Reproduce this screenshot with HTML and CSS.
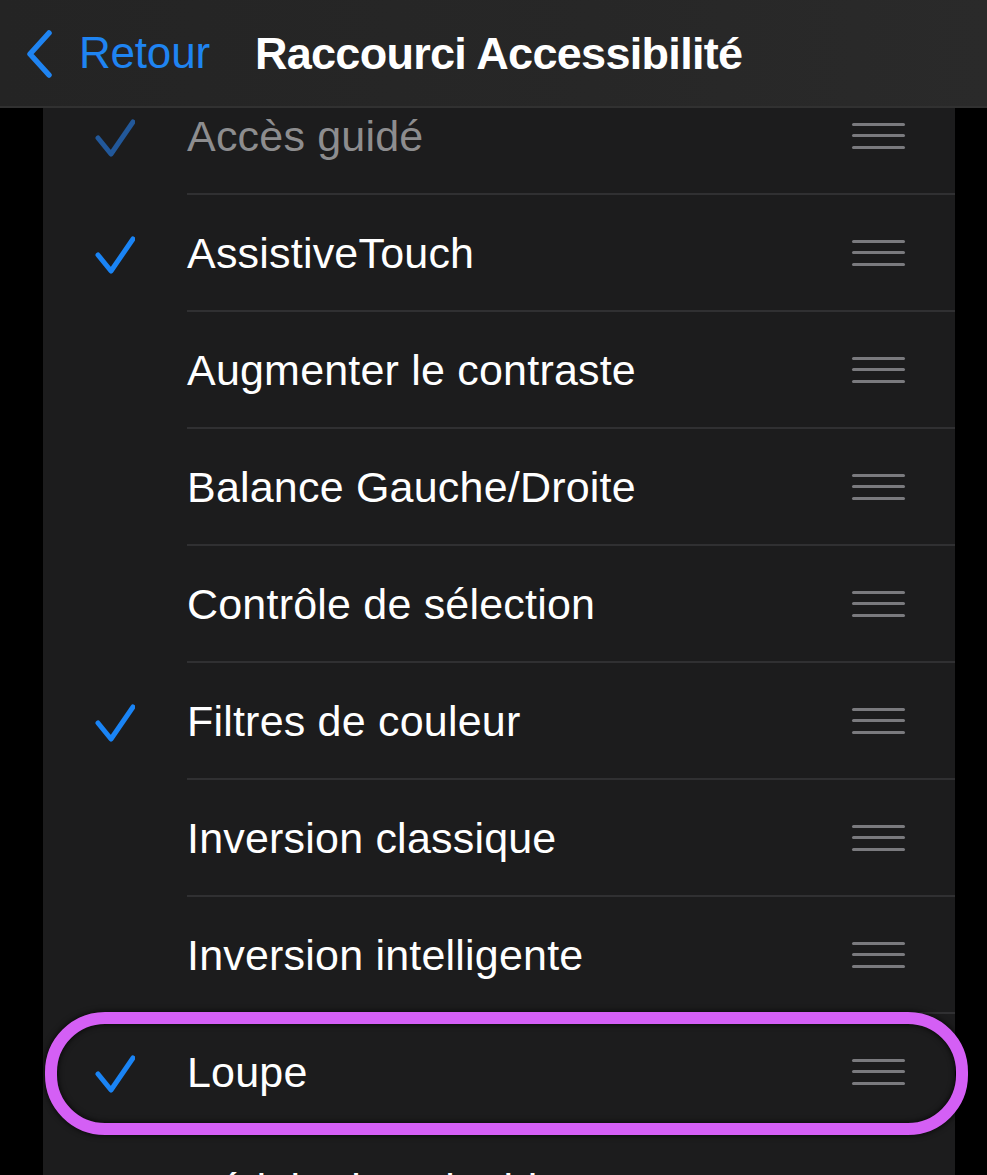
FILE: index.html
```html
<!DOCTYPE html>
<html lang="fr">
<head>
<meta charset="utf-8">
<title>Raccourci Accessibilité</title>
<link rel="stylesheet" href="styles.css">
</head>
<body>
<header class="navbar">
  <a class="back">
    <svg class="chevron" width="30" height="48" viewBox="0 0 30 48"><path d="M25 3 L6 24 L25 45" fill="none" stroke="#1f84f2" stroke-width="5.5" stroke-linecap="round" stroke-linejoin="round"/></svg>
    <span class="back-label">Retour</span>
  </a>
  <h1 class="title">Raccourci Accessibilité</h1>
</header>
<main class="list">
  <div class="row dim">
    <div class="check-cell"><svg class="check" width="40" height="40" viewBox="0 0 40 40"><path d="M3 20 L16 36 L38 4" fill="none" stroke="currentColor" stroke-width="5" stroke-linecap="round" stroke-linejoin="round"/></svg></div>
    <div class="content"><span class="label">Accès guidé</span><span class="handle"><i></i><i></i><i></i></span></div>
  </div>
  <div class="row">
    <div class="check-cell"><svg class="check" width="40" height="40" viewBox="0 0 40 40"><path d="M3 20 L16 36 L38 4" fill="none" stroke="currentColor" stroke-width="5" stroke-linecap="round" stroke-linejoin="round"/></svg></div>
    <div class="content"><span class="label">AssistiveTouch</span><span class="handle"><i></i><i></i><i></i></span></div>
  </div>
  <div class="row">
    <div class="check-cell"></div>
    <div class="content"><span class="label">Augmenter le contraste</span><span class="handle"><i></i><i></i><i></i></span></div>
  </div>
  <div class="row">
    <div class="check-cell"></div>
    <div class="content"><span class="label">Balance Gauche/Droite</span><span class="handle"><i></i><i></i><i></i></span></div>
  </div>
  <div class="row">
    <div class="check-cell"></div>
    <div class="content"><span class="label">Contrôle de sélection</span><span class="handle"><i></i><i></i><i></i></span></div>
  </div>
  <div class="row">
    <div class="check-cell"><svg class="check" width="40" height="40" viewBox="0 0 40 40"><path d="M3 20 L16 36 L38 4" fill="none" stroke="currentColor" stroke-width="5" stroke-linecap="round" stroke-linejoin="round"/></svg></div>
    <div class="content"><span class="label">Filtres de couleur</span><span class="handle"><i></i><i></i><i></i></span></div>
  </div>
  <div class="row">
    <div class="check-cell"></div>
    <div class="content"><span class="label">Inversion classique</span><span class="handle"><i></i><i></i><i></i></span></div>
  </div>
  <div class="row">
    <div class="check-cell"></div>
    <div class="content"><span class="label">Inversion intelligente</span><span class="handle"><i></i><i></i><i></i></span></div>
  </div>
  <div class="row highlighted">
    <div class="check-cell"><svg class="check" width="40" height="40" viewBox="0 0 40 40"><path d="M3 20 L16 36 L38 4" fill="none" stroke="currentColor" stroke-width="5" stroke-linecap="round" stroke-linejoin="round"/></svg></div>
    <div class="content"><span class="label">Loupe</span><span class="handle"><i></i><i></i><i></i></span></div>
    <span class="ring"></span>
  </div>
  <div class="row">
    <div class="check-cell"></div>
    <div class="content"><span class="label">Réduire le point blanc</span><span class="handle"><i></i><i></i><i></i></span></div>
  </div>
</main>
</body>
</html>
```
FILE: styles.css
```css
html, body {
  margin: 0;
  padding: 0;
  background: #000;
  overflow: hidden;
  height: 1175px;
}
body {
  font-family: "Liberation Sans", Arial, sans-serif;
  color: #fff;
}
.navbar {
  position: relative;
  z-index: 2;
  height: 108px;
  box-sizing: border-box;
  display: flex;
  align-items: center;
  padding-left: 24px;
  background: linear-gradient(90deg, #242424 0%, #272727 60%, #2a2a2a 100%);
  border-bottom: 2px solid #313131;
}
.back {
  display: flex;
  align-items: center;
  color: #1f84f2;
}
.chevron {
  display: block;
  margin-top: 2px;
}
.back-label {
  margin-left: 25px;
  font-size: 44px;
  line-height: 1;
  letter-spacing: -0.2px;
}
.title {
  margin: 0 0 0 45px;
  font-size: 45px;
  font-weight: 700;
  line-height: 1;
  letter-spacing: -0.7px;
  color: #fff;
}
.list {
  margin: -30px 0 0 43px;
  width: 912px;
  background: #1c1c1d;
}
.row {
  display: flex;
  height: 117px;
}
.check-cell {
  width: 144px;
  flex: none;
  display: flex;
  align-items: center;
  justify-content: center;
  color: #1a84f5;
}
.check {
  display: block;
  margin-top: 2px;
}
.content {
  flex: 1;
  display: flex;
  align-items: center;
  justify-content: space-between;
  border-bottom: 2px solid #303032;
  padding-right: 50px;
}
.label {
  font-size: 43px;
  letter-spacing: 0.2px;
  margin-top: 2px;
}
.handle {
  display: flex;
  flex-direction: column;
  gap: 8.5px;
  width: 53px;
}
.handle i {
  display: block;
  height: 3px;
  border-radius: 2px;
  background: #7a7a7e;
}
.dim .label {
  color: #8d8d8f;
}
.dim .check-cell {
  color: #22589a;
}
.highlighted {
  position: relative;
}
.highlighted .content {
  border-bottom-color: transparent;
}
.ring {
  position: absolute;
  left: 2px;
  right: -13px;
  top: -2px;
  bottom: -4px;
  border: 12px solid #d45ff5;
  border-radius: 60px;
  box-shadow: 0 0 6px rgba(0, 0, 0, 0.9), inset 0 0 6px rgba(0, 0, 0, 0.9);
  pointer-events: none;
}
```
